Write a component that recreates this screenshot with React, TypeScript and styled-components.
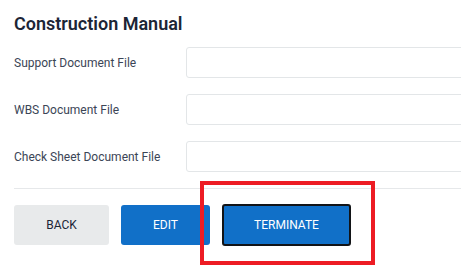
import React from "react";
import styled, { createGlobalStyle } from "styled-components";

const Global = createGlobalStyle`
  html, body { margin: 0; padding: 0; background: #ffffff; }
  body { font-family: Roboto, "Liberation Sans", sans-serif; }
`;

const Page = styled.div`
  width: 461px;
  height: 277px;
  overflow: hidden;
  padding: 13px 0 0 14px;
  box-sizing: border-box;
`;

const Title = styled.h2`
  margin: 0 0 12px 0;
  font-size: 18px;
  line-height: 22px;
  font-weight: 600;
  color: #1c2536;
`;

const Form = styled.div`
  display: flex;
  flex-direction: column;
  gap: 16px;
  width: 520px;
`;

const Row = styled.div`
  display: grid;
  grid-template-columns: 172px 1fr;
  align-items: center;
`;

const Label = styled.label`
  font-size: 12px;
  color: #3b4556;
`;

const Input = styled.div`
  height: 31px;
  box-sizing: border-box;
  border: 1px solid #e3e6e8;
  border-radius: 3px;
  background: #fff;
`;

const Divider = styled.hr`
  width: 520px;
  margin: 16px 0 0 0;
  border: none;
  border-top: 1px solid #e6e8ea;
`;

const Actions = styled.div`
  display: flex;
  align-items: center;
  gap: 12px;
  margin-top: 15px;
`;

const Button = styled.button<{ $variant: "gray" | "blue"; $width: number; $outlined?: boolean }>`
  width: ${(p) => p.$width}px;
  height: ${(p) => (p.$outlined ? 42 : 40)}px;
  box-sizing: border-box;
  border: ${(p) => (p.$outlined ? "2px solid #121417" : "none")};
  border-radius: 3px;
  background: ${(p) => (p.$variant === "gray" ? "#e8eaeb" : "#1170c8")};
  color: ${(p) => (p.$variant === "gray" ? "#1c2536" : "#ffffff")};
  font-family: Roboto, "Liberation Sans", sans-serif;
  font-size: 12px;
  text-transform: uppercase;
  padding: 0;
  cursor: pointer;
`;

const Highlight = styled.div`
  position: relative;
  margin-left: 0px;
`;

const RedBox = styled.div`
  position: absolute;
  left: -22px;
  top: -23px;
  width: 175px;
  height: 84px;
  box-sizing: border-box;
  border: 4px solid #ed1c24;
  pointer-events: none;
`;

const fields = ["Support Document File", "WBS Document File", "Check Sheet Document File"];

export default function App() {
  return (
    <>
      <Global />
      <Page>
        <Title>Construction Manual</Title>
        <Form>
          {fields.map((f) => (
            <Row key={f}>
              <Label>{f}</Label>
              <Input />
            </Row>
          ))}
        </Form>
        <Divider />
        <Actions>
          <Button $variant="gray" $width={95}>Back</Button>
          <Button $variant="blue" $width={89}>Edit</Button>
          <Highlight>
            <Button $variant="blue" $width={129} $outlined>Terminate</Button>
            <RedBox />
          </Highlight>
        </Actions>
      </Page>
    </>
  );
}
